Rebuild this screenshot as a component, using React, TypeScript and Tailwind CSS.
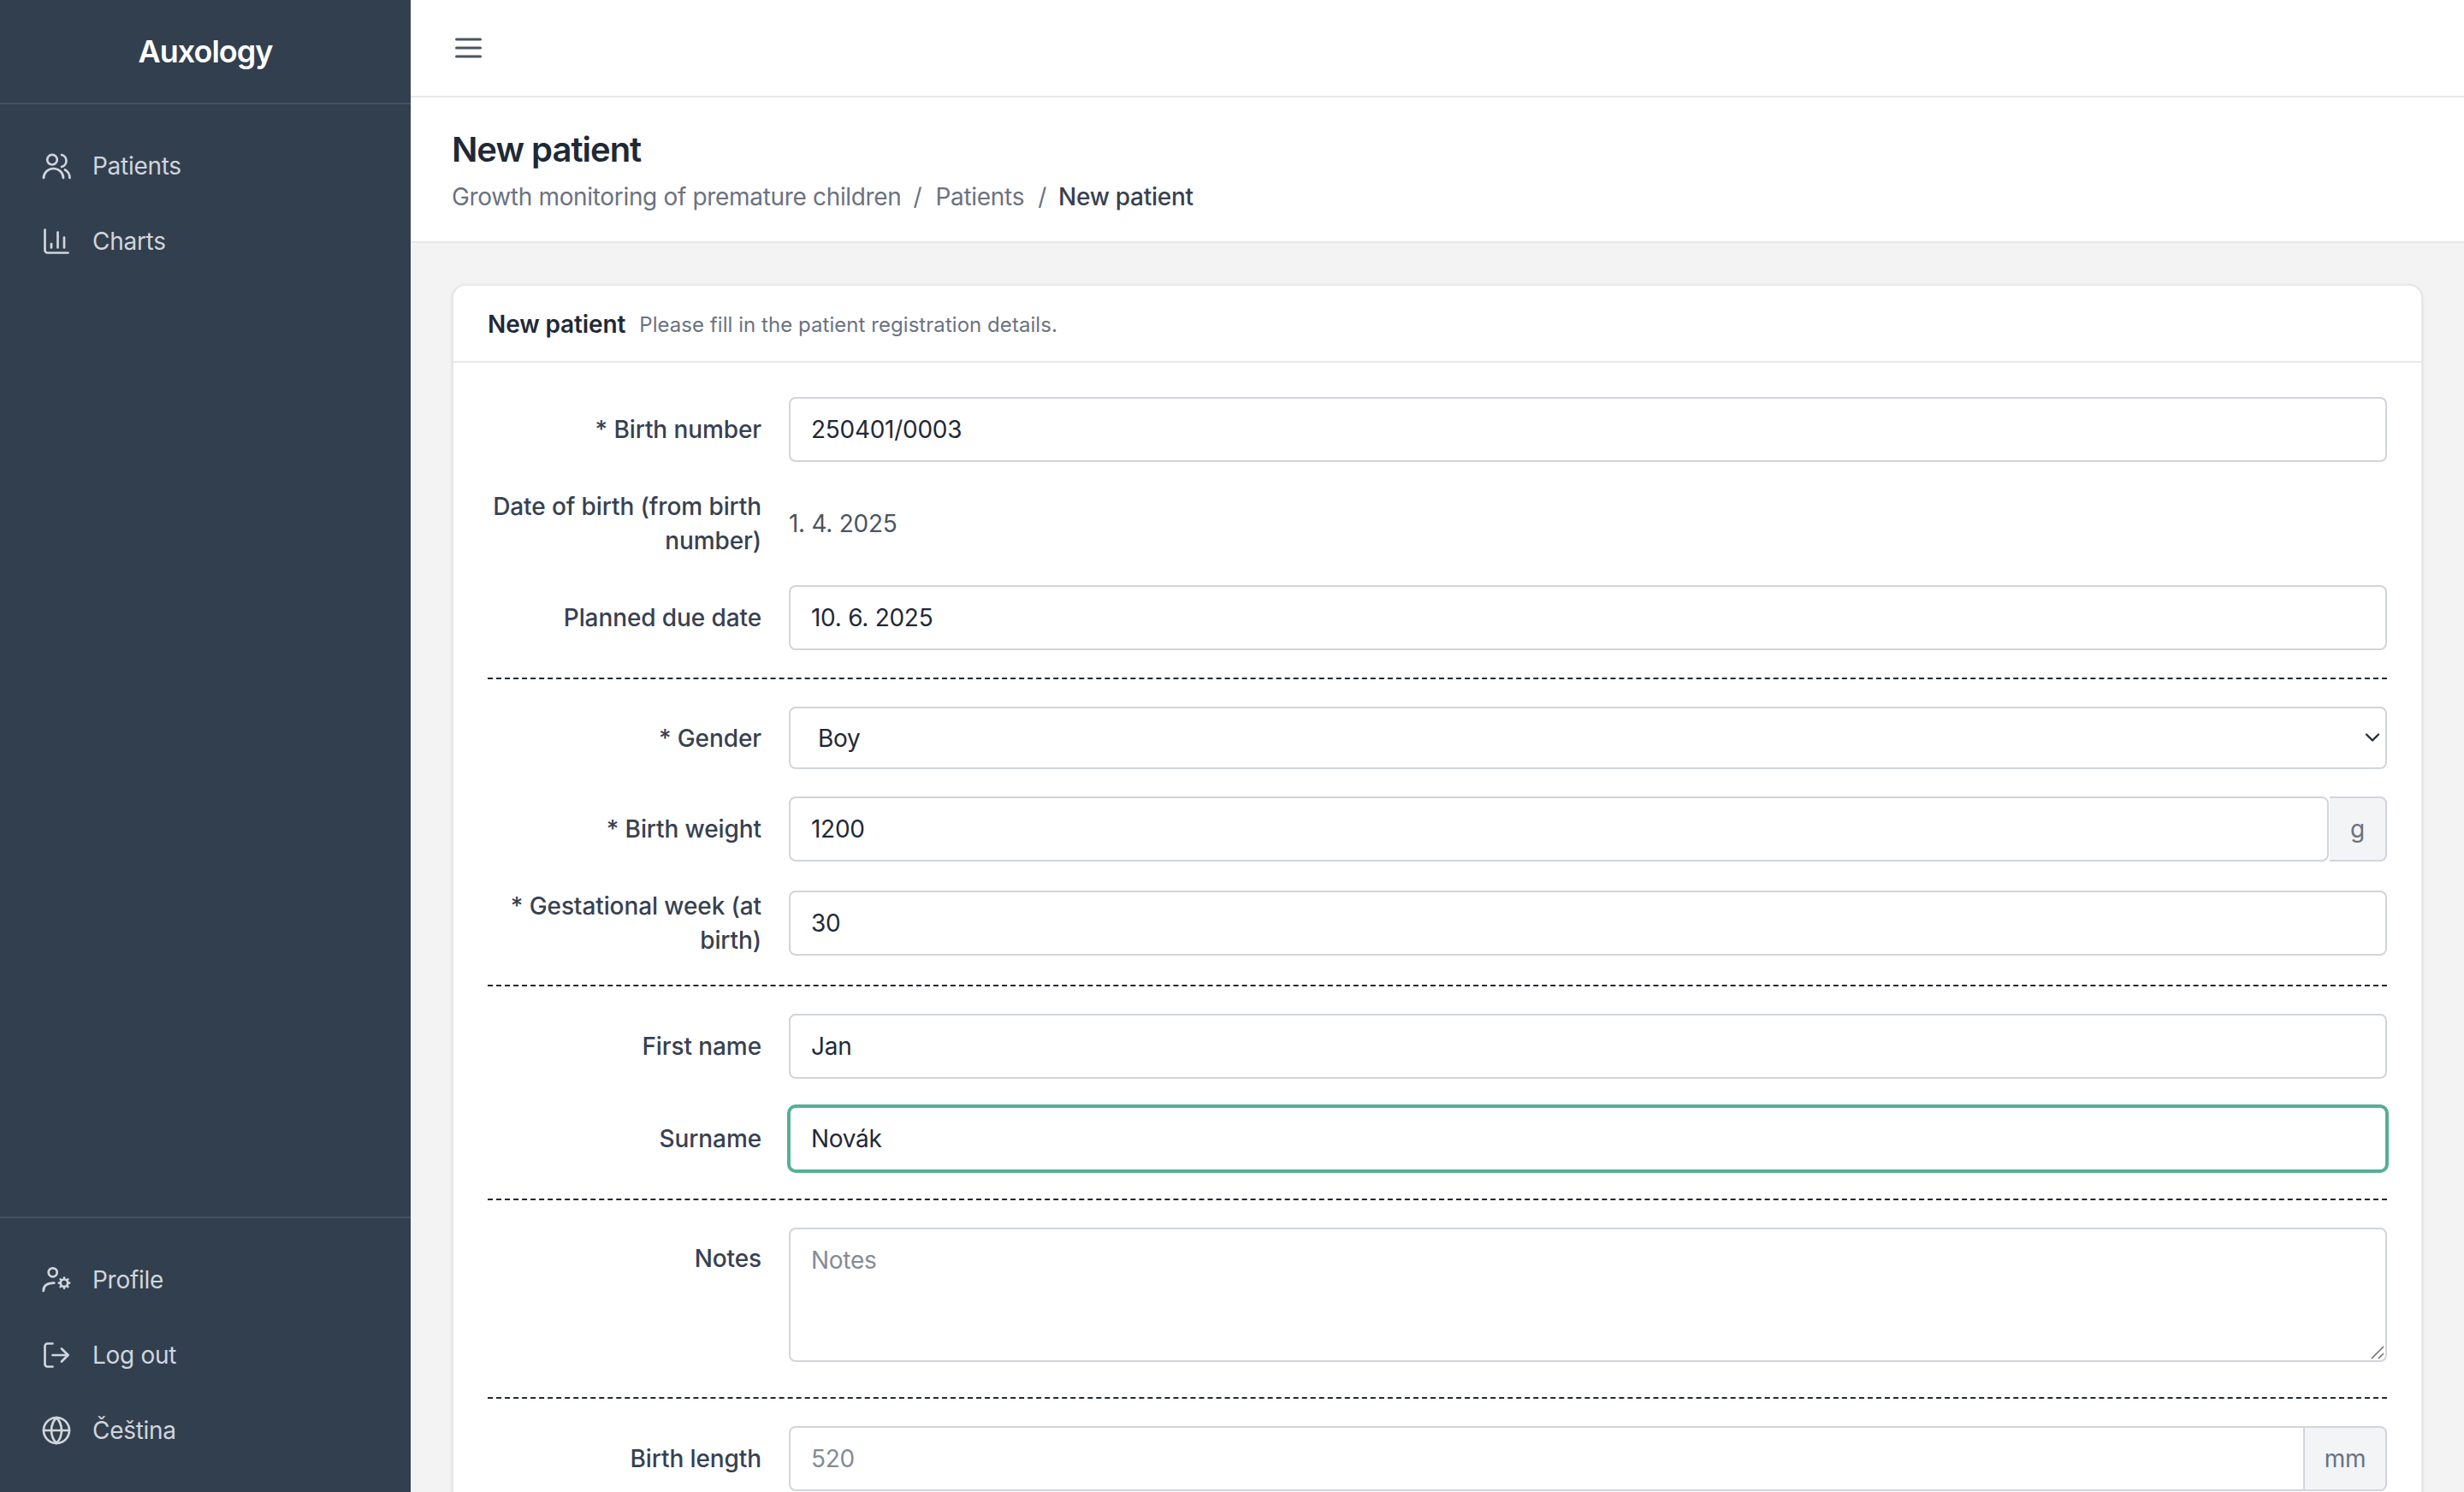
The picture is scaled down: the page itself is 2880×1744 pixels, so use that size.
import { ChevronDown, ChartColumn, Globe, LogOut } from 'lucide-react';
import type { ComponentType, ReactNode } from 'react';

function PatientsIcon() {
  return (
    <svg width="36" height="36" viewBox="0 0 36 36" fill="none" stroke="currentColor" strokeWidth="2.7" strokeLinecap="round" className="shrink-0">
      <circle cx="13" cy="10.7" r="5.8" />
      <path d="M24 5a7.2 7.2 0 0 1 0 14" />
      <path d="M3 32a11.5 11 0 0 1 23 0" />
      <path d="M28 22.5C31 24 33.5 28 33.5 32" />
    </svg>
  );
}

function ProfileIcon() {
  const teeth = [0, 45, 90, 135, 180, 225, 270, 315];
  return (
    <svg width="36" height="36" viewBox="0 0 36 36" fill="none" stroke="currentColor" strokeWidth="2.7" strokeLinecap="round" className="shrink-0">
      <circle cx="13.7" cy="9.3" r="5" />
      <path d="M2.7 31C2.7 25 7 21.7 15.3 21.7" />
      <circle cx="27" cy="21.7" r="4.2" />
      {teeth.map((deg) => (
        <path key={deg} d="M27 15.6v.4" transform={`rotate(${deg} 27 21.7)`} />
      ))}
    </svg>
  );
}

function ChartsIcon() {
  return <ChartColumn size={36} strokeWidth={1.8} className="shrink-0" />;
}

function LogOutIcon() {
  return <LogOut size={36} strokeWidth={1.8} className="shrink-0" />;
}

function GlobeIcon() {
  return <Globe size={36} strokeWidth={1.8} className="shrink-0" />;
}

const TOP_NAV = [
  { label: 'Patients', Icon: PatientsIcon },
  { label: 'Charts', Icon: ChartsIcon },
];

const BOTTOM_NAV = [
  { label: 'Profile', Icon: ProfileIcon },
  { label: 'Log out', Icon: LogOutIcon },
  { label: 'Čeština', Icon: GlobeIcon },
];

const inputClass =
  'h-[76px] w-full rounded-[8px] border-2 border-[#d1d5db] bg-white px-[24px] text-[28px] text-[#1f2937] placeholder:text-[#858b95] outline-none';

function NavItem({ label, Icon }: { label: string; Icon: ComponentType }) {
  return (
    <div className="flex h-[88px] items-center gap-[24px] pl-[48px] text-[28px] text-[#d1d5db]">
      <Icon />
      <span>{label}</span>
    </div>
  );
}

function Row({ label, children, top }: { label: string; children: ReactNode; top?: boolean }) {
  return (
    <div className={`flex gap-[32px] ${top ? 'items-start' : 'items-center'}`}>
      <label
        className={`w-[320px] shrink-0 text-right text-[28px] leading-[40px] font-medium tracking-[-0.1px] text-[#374151] ${top ? 'pt-[16px]' : ''}`}
      >
        {label}
      </label>
      <div className="min-w-0 flex-1">{children}</div>
    </div>
  );
}

function Divider() {
  return <div className="border-t-2 border-dashed border-[#1f2937]" />;
}

export default function App() {
  return (
    <div className="flex h-screen overflow-hidden bg-[#f3f3f3] font-['Inter',sans-serif] tracking-[-0.28px]">
      {/* Sidebar */}
      <aside className="flex w-[480px] shrink-0 flex-col bg-[#323f4f]">
        <div className="flex h-[122px] items-center justify-center border-b-2 border-[#465261] text-[36px] font-semibold tracking-[-1px] text-white">
          Auxology
        </div>
        <nav className="flex-1 py-[28px]">
          {TOP_NAV.map((item) => (
            <NavItem key={item.label} {...item} />
          ))}
        </nav>
        <nav className="border-t-2 border-[#465261] pt-[28px] pb-[28px]">
          {BOTTOM_NAV.map((item) => (
            <NavItem key={item.label} {...item} />
          ))}
        </nav>
      </aside>

      <div className="flex min-w-0 flex-1 flex-col overflow-hidden">
        {/* Top bar */}
        <header className="flex h-[114px] shrink-0 items-center border-b-2 border-[#e5e7eb] bg-white pl-[52px]">
          <svg width="32" height="24" viewBox="0 0 32 24" stroke="#4b5563" strokeWidth="3" strokeLinecap="round">
            <path d="M1.5 2h28M1.5 12h28M1.5 22h28" />
          </svg>
        </header>

        {/* Page title */}
        <div className="flex h-[170px] shrink-0 flex-col justify-center border-b-2 border-[#e5e7eb] bg-white pl-[48px]">
          <h1 className="mt-[1px] text-[40px] leading-[56px] font-semibold tracking-[-1px] text-[#1f2937]">New patient</h1>
          <div className="mt-[7px] flex gap-[14px] text-[28px] leading-[40px] text-[#6b7280]">
            <span className="tracking-[-0.33px]">Growth monitoring of premature children</span>
            <span>/</span>
            <span className="ml-[2px]">Patients</span>
            <span className="ml-[2px]">/</span>
            <span className="font-medium text-[#374151]">New patient</span>
          </div>
        </div>

        <main className="min-h-0 flex-1 p-[48px]">
          <div className="rounded-[16px] border-2 border-[#e5e7eb] bg-white shadow-sm">
            <div className="flex h-[90px] items-center gap-[16px] border-b-2 border-[#e5e7eb] px-[40px] pt-[2px]">
              <span className="text-[28px] font-semibold tracking-[-0.12px] text-[#1f2937]">New patient</span>
              <span className="mt-[2px] text-[24px] tracking-[0.05px] text-[#6b7280]">
                Please fill in the patient registration details.
              </span>
            </div>

            <form className="flex flex-col gap-[32px] px-[40px] pt-[40px] pb-[40px]">
              <Row label="* Birth number">
                <input className={inputClass} defaultValue="250401/0003" />
              </Row>
              <Row label="Date of birth (from birth number)">
                <span className="text-[28px] text-[#4b5563]">1. 4. 2025</span>
              </Row>
              <Row label="Planned due date">
                <input className={inputClass} defaultValue="10. 6. 2025" />
              </Row>
              <Divider />
              <Row label="* Gender">
                <div className="relative">
                  <select className="h-[73px] w-full appearance-none rounded-[8px] border-2 border-[#d1d5db] bg-white px-[32px] text-[28px] text-[#1f2937] outline-none">
                    <option>Boy</option>
                    <option>Girl</option>
                  </select>
                  <ChevronDown
                    size={28}
                    strokeWidth={2}
                    className="pointer-events-none absolute top-[22px] right-[3px] text-[#1f2937]"
                  />
                </div>
              </Row>
              <Row label="* Birth weight">
                <div className="flex">
                  <input className={inputClass} defaultValue="1200" />
                  <span className="ml-[1px] flex h-[76px] w-[67px] shrink-0 items-center justify-center rounded-r-[8px] border-2 border-l-0 border-[#d1d5db] bg-[#f3f4f6] text-[28px] text-[#6b7280]">
                    g
                  </span>
                </div>
              </Row>
              <Row label="* Gestational week (at birth)">
                <input className={inputClass} defaultValue="30" />
              </Row>
              <Divider />
              <Row label="First name">
                <input className={inputClass} defaultValue="Jan" />
              </Row>
              <Row label="Surname">
                <input
                  className="h-[76px] w-full rounded-[8px] border-2 border-[#54b095] bg-white px-[24px] text-[28px] text-[#1f2937] ring-2 ring-[#54b095] outline-none"
                  defaultValue="Novák"
                />
              </Row>
              <Divider />
              <Row label="Notes" top>
                <div className="relative mb-[9px]">
                  <textarea
                    className="block h-[157px] w-full resize-none rounded-[8px] border-2 border-[#d1d5db] bg-white px-[24px] py-[16px] text-[28px] leading-[40px] text-[#1f2937] outline-none placeholder:text-[#858b95]"
                    placeholder="Notes"
                  />
                  <svg
                    width="16"
                    height="16"
                    viewBox="0 0 16 16"
                    stroke="#6b6b6b"
                    strokeWidth="1.5"
                    className="pointer-events-none absolute right-[3px] bottom-[3px]"
                  >
                    <path d="M1 15 15 1M9 15l6-6" />
                  </svg>
                </div>
              </Row>
              <Divider />
              <Row label="Birth length">
                <div className="flex">
                  <input
                    className="h-[76px] w-full rounded-l-[8px] border-2 border-[#d1d5db] bg-white px-[24px] text-[28px] text-[#1f2937] outline-none placeholder:text-[#858b95]"
                    placeholder="520"
                  />
                  <span className="flex h-[76px] w-[96px] shrink-0 items-center justify-center rounded-r-[8px] border-2 border-l-0 border-[#d1d5db] bg-[#f3f4f6] text-[28px] text-[#6b7280]">
                    mm
                  </span>
                </div>
              </Row>
            </form>
          </div>
        </main>
      </div>
    </div>
  );
}
